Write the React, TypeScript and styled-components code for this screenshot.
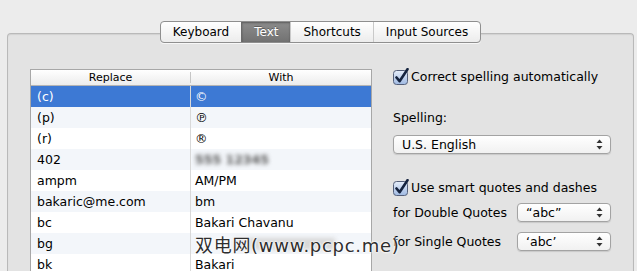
import React from 'react';
import styled, { createGlobalStyle } from 'styled-components';

const Global = createGlobalStyle`
    html, body {
        margin: 0;
        padding: 0;
        background: #ececec;
        overflow: hidden;
    }
    #root {
        height: 271px;
        overflow: hidden;
    }
`;

const tabs = ['Keyboard', 'Text', 'Shortcuts', 'Input Sources'];

type Row = { replace: string; with?: string; blurred?: boolean; smudge?: boolean };

const rows: Row[] = [
    { replace: '(c)', with: '©' },
    { replace: '(p)', with: '℗' },
    { replace: '(r)', with: '®' },
    { replace: '402', with: '555 12345', blurred: true },
    { replace: 'ampm', with: 'AM/PM' },
    { replace: 'bakaric@me.com', with: 'bm' },
    { replace: 'bc', with: 'Bakari Chavanu' },
    { replace: 'bg', smudge: true },
    { replace: 'bk', with: 'Bakari' },
];

const CheckIcon = () => (
    <svg width="17" height="17" viewBox="0 0 17 17">
        <defs>
            <linearGradient id="cb" x1="0" y1="0" x2="0" y2="1">
                <stop offset="0" stopColor="#e6eefa" />
                <stop offset="1" stopColor="#9fb9e2" />
            </linearGradient>
        </defs>
        <rect x="0.5" y="2.5" width="14" height="14" rx="3" fill="url(#cb)" stroke="#55607a" />
        <path d="M3.5 9.5 L6.6 13.2 L14.5 1.2" fill="none" stroke="#15233f" strokeWidth="2.6" strokeLinecap="round" strokeLinejoin="round" />
    </svg>
);

const Arrows = () => (
    <svg width="7" height="11" viewBox="0 0 7 11">
        <path d="M3.5 0.5 L6.5 4 L0.5 4 Z" fill="#333" />
        <path d="M3.5 10.5 L6.5 7 L0.5 7 Z" fill="#333" />
    </svg>
);

const App: React.FC = () => {
    return (
        <S.Page>
            <Global />
            <S.Panel>
                <S.TabBar>
                    {tabs.map((t) => (
                        <S.Tab key={t} active={t === 'Text'}>{t}</S.Tab>
                    ))}
                </S.TabBar>

                <S.Body>
                    <S.Table>
                        <S.HeadRow>
                            <S.HeadCell>Replace</S.HeadCell>
                            <S.HeadCell>With</S.HeadCell>
                        </S.HeadRow>
                        {rows.map((r, i) => (
                            <S.Row key={r.replace} selected={i === 0} striped={i % 2 === 1}>
                                <S.Cell>{r.replace}</S.Cell>
                                <S.Cell>
                                    {r.blurred && <S.Blur>{r.with}</S.Blur>}
                                    {r.smudge && <S.Smudge />}
                                    {!r.blurred && !r.smudge && r.with}
                                </S.Cell>
                            </S.Row>
                        ))}
                        <S.Watermark>双电网(www.pcpc.me)</S.Watermark>
                    </S.Table>

                    <S.Options>
                        <S.CheckRow>
                            <CheckIcon />
                            <span>Correct spelling automatically</span>
                        </S.CheckRow>

                        <S.Label>Spelling:</S.Label>
                        <S.Select wide>
                            <span>U.S. English</span>
                            <Arrows />
                        </S.Select>

                        <S.CheckRow second>
                            <CheckIcon />
                            <span>Use smart quotes and dashes</span>
                        </S.CheckRow>

                        <S.QuoteRow>
                            <span>for Double Quotes</span>
                            <S.Select>
                                <span>“abc”</span>
                                <Arrows />
                            </S.Select>
                        </S.QuoteRow>
                        <S.QuoteRow last>
                            <span>for Single Quotes</span>
                            <S.Select>
                                <span>‘abc’</span>
                                <Arrows />
                            </S.Select>
                        </S.QuoteRow>
                    </S.Options>
                </S.Body>
            </S.Panel>
        </S.Page>
    );
};

const font = `"DejaVu Sans", "Noto Sans CJK SC", sans-serif`;

const S = {
    Page: styled.div`
        padding: 33px 3px 0 7px;
        font-family: ${font};
        font-size: 12.5px;
        color: #000;
    `,
    Panel: styled.div`
        height: 260px;
        background: #e3e3e3;
        border: 1px solid #b9b9b9;
        border-bottom: none;
        border-radius: 4px 4px 0 0;
        box-shadow: inset 0 1px 1px rgba(0, 0, 0, 0.08);
    `,
    TabBar: styled.div`
        display: flex;
        width: max-content;
        margin: -13px auto 0;
        height: 20px;
        border: 1px solid #8f8f8f;
        border-radius: 4px;
        overflow: hidden;
        background: linear-gradient(#ffffff, #ececec);
        box-shadow: 0 1px 0 rgba(255, 255, 255, 0.7);
    `,
    Tab: styled.div<{ active?: boolean }>`
        display: flex;
        align-items: center;
        padding: 0 12px;
        font-size: 12px;
        border-left: 1px solid ${(p) => (p.active ? '#6a6a6a' : '#c9c9c9')};
        color: ${(p) => (p.active ? '#fff' : '#000')};
        background: ${(p) => (p.active ? 'linear-gradient(#8c8c8c, #727272)' : 'transparent')};
        box-shadow: ${(p) => (p.active ? 'inset 0 1px 2px rgba(0,0,0,0.35)' : 'none')};
        text-shadow: ${(p) => (p.active ? '0 -1px 0 rgba(0,0,0,0.3)' : 'none')};

        &:first-child {
            border-left: none;
        }
    `,
    Body: styled.div`
        display: flex;
        align-items: flex-start;
        gap: 21px;
        padding: 26px 0 0 22px;
    `,
    Table: styled.div`
        position: relative;
        width: 340px;
        border: 1px solid #a7a7a7;
        background: #fff;
    `,
    HeadRow: styled.div`
        display: grid;
        grid-template-columns: 159px 1fr;
        height: 15px;
        background: linear-gradient(#ffffff, #ececec);
        border-bottom: 1px solid #b4b4b4;
    `,
    HeadCell: styled.div`
        display: flex;
        align-items: center;
        justify-content: center;
        font-size: 11px;
        line-height: 15px;

        & + & {
            border-left: 1px solid #c6c6c6;
            margin: 2px 0;
            line-height: 11px;
        }
    `,
    Row: styled.div<{ selected?: boolean; striped?: boolean }>`
        display: grid;
        grid-template-columns: 159px 1fr;
        height: 21px;
        background: ${(p) => (p.selected ? '#3d79d4' : p.striped ? '#f3f6fa' : '#ffffff')};
        color: ${(p) => (p.selected ? '#fff' : '#000')};
    `,
    Cell: styled.div`
        display: flex;
        align-items: center;
        padding-left: 6px;
        white-space: nowrap;
        overflow: hidden;

        & + & {
            border-left: 1px solid #d9d9d9;
            padding-left: 4px;
        }
    `,
    Blur: styled.span`
        color: #5a5a5a;
        font-weight: bold;
        filter: blur(2px);
    `,
    Smudge: styled.span`
        display: block;
        margin-left: 40px;
        width: 100px;
        height: 12px;
        background: #d8d8d8;
        filter: blur(2px);
    `,
    Watermark: styled.div`
        position: absolute;
        left: 164px;
        top: 167px;
        font-size: 18px;
        line-height: 18px;
        color: #2e2e2e;
        white-space: nowrap;
        letter-spacing: 0.7px;
        text-shadow: 0 0 2px #fff, 0 0 2px #fff, 0 0 3px #fff;
        pointer-events: none;
        z-index: 2;
    `,
    Options: styled.div`
        display: flex;
        flex-direction: column;
        width: 218px;
        padding-top: 2px;
    `,
    CheckRow: styled.div<{ second?: boolean }>`
        display: flex;
        align-items: center;
        gap: 1px;
        height: 17px;
        margin-top: ${(p) => (p.second ? '25px' : '-3px')};
        white-space: nowrap;
    `,
    Label: styled.div`
        margin-top: 25px;
        line-height: 16px;
    `,
    Select: styled.div<{ wide?: boolean }>`
        display: flex;
        align-items: center;
        justify-content: space-between;
        box-sizing: border-box;
        width: ${(p) => (p.wide ? '218px' : '94px')};
        height: 19px;
        margin-top: ${(p) => (p.wide ? '9px' : '0')};
        padding: 0 7px 0 8px;
        border: 1px solid #a3a3a3;
        border-radius: 4px;
        background: linear-gradient(#ffffff, #f1f1f1);
        box-shadow: 0 1px 1px rgba(0, 0, 0, 0.12);
    `,
    QuoteRow: styled.div<{ last?: boolean }>`
        display: flex;
        align-items: center;
        justify-content: space-between;
        height: 20px;
        margin-top: ${(p) => (p.last ? '9px' : '6px')};
        white-space: nowrap;
    `,
};

export default App;
